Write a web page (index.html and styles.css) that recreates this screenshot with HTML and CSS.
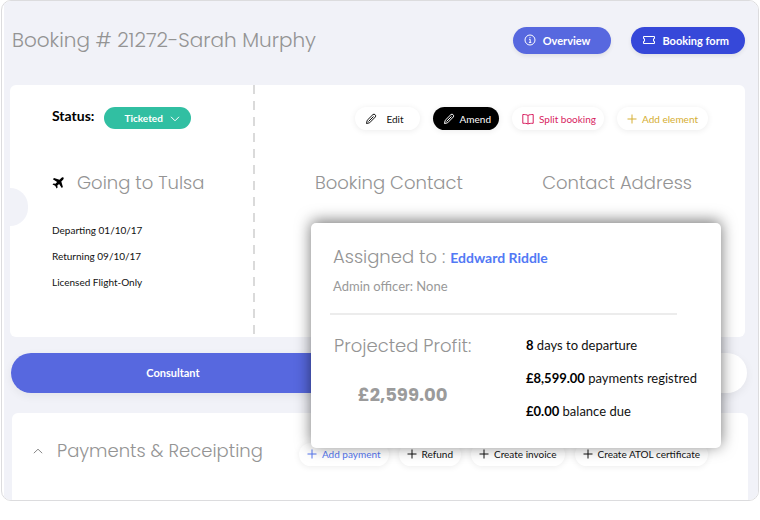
FILE: index.html
```
<!DOCTYPE html>
<html lang="en">

<head>
    <meta charset="utf-8">
    <title>Booking # 21272</title>
    <link rel="stylesheet" href="styles.css">
</head>

<body>
    <div class="frame">
        <div class="page">
            <header class="page-header">
                <h1>Booking # 21272-Sarah Murphy</h1>
                <button type="button" class="main-button overview">
                    <svg class="icon" width="12" height="12" viewBox="0 0 12 12">
                        <circle cx="6" cy="6" r="5" />
                        <path d="M5 5.3h1.2v3M4.9 8.4h2.4M6 3.1v1" />
                    </svg>
                    Overview
                </button>
                <button type="button" class="main-button booking-form">
                    <svg class="icon" width="12" height="12" viewBox="0 0 12 12">
                        <path d="M.5 2.500h11v2.200h-1v2.600h1v2.200H.5V7.300h1V4.700h-1z" />
                    </svg>
                    Booking form
                </button>
            </header>

            <main>
                <section class="card booking">
                    <div class="trip">
                        <div class="status">
                            <label for="status">Status:</label>
                            <div class="status-box">
                                <select id="status">
                                    <option>Ticketed</option>
                                </select>
                                <svg class="icon" width="10" height="6" viewBox="0 0 10 6">
                                    <path d="M1 .8l4 4 4-4" />
                                </svg>
                            </div>
                        </div>
                        <h2>
                            <svg width="12" height="12" viewBox="0 0 12 12">
                                <path d="M11.4.6c-.6-.6-1.5-.3-2.1.3L7.5 2.700 2 1.100l-1.100 1.100 4.200 2.700L3.500 6.700 1.500 6.400l-1 1 2.700 1.400L4.600 11.500l1-1-.3-2L7.100 6.900 9.800 11.100l1.100-1.100L9.300 4.500l1.800-1.800c.6-.6.9-1.500.3-2.100z" />
                            </svg>
                            Going to Tulsa
                        </h2>
                        <p>Departing 01/10/17</p>
                        <p>Returning 09/10/17</p>
                        <p>Licensed Flight-Only</p>
                    </div>
                    <div class="details">
                        <div class="actions">
                            <button type="button" class="pill edit">
                                <svg class="icon" width="12" height="12" viewBox="0 0 12 12">
                                    <path d="M1.500 10.500l.7-3.200L8 1.500c1.300-1.100 3.500.9 2.400 2.400l-5.800 5.900zM3.500 8.500l5-5" />
                                </svg>
                                Edit
                            </button>
                            <button type="button" class="pill amend">
                                <svg class="icon" width="12" height="12" viewBox="0 0 12 12">
                                    <path d="M1.500 10.500l.7-3.200L8 1.500c1.300-1.100 3.500.9 2.400 2.400l-5.800 5.900zM3.500 8.500l5-5" />
                                </svg>
                                Amend
                            </button>
                            <button type="button" class="pill split">
                                <svg class="icon" width="12" height="12" viewBox="0 0 12 12">
                                    <path d="M6 2.500C5 1.600 2.500 1.500.8 1.500v8.800c1.900 0 4.200 0 5.200.7 1-.7 3.300-.7 5.200-.7V1.500C9.500 1.500 7 1.600 6 2.500zM6 2.500V11" />
                                </svg>
                                Split booking
                            </button>
                            <button type="button" class="pill add">
                                <svg class="icon" width="10" height="10" viewBox="0 0 10 10">
                                    <path d="M5 .5v9M.5 5h9" />
                                </svg>
                                Add element
                            </button>
                        </div>
                        <div class="contact">
                            <h2>Booking Contact</h2>
                            <h2>Contact Address</h2>
                        </div>
                    </div>
                </section>

                <nav class="tabs">
                    <a href="#consultant">Consultant</a>
                </nav>

                <section class="card payments">
                    <svg class="icon chevron" width="10" height="6" viewBox="0 0 10 6">
                        <path d="M.8 5.200l4.200-4 4.200 4" />
                    </svg>
                    <h2>Payments &amp; Receipting</h2>
                    <div class="payment-actions">
                        <button type="button" class="pill add-payment">
                            <svg class="icon" width="10" height="10" viewBox="0 0 10 10">
                                <path d="M5 .5v9M.5 5h9" />
                            </svg>
                            Add payment
                        </button>
                        <button type="button" class="pill">
                            <svg class="icon" width="10" height="10" viewBox="0 0 10 10">
                                <path d="M5 .5v9M.5 5h9" />
                            </svg>
                            Refund
                        </button>
                        <button type="button" class="pill">
                            <svg class="icon" width="10" height="10" viewBox="0 0 10 10">
                                <path d="M5 .5v9M.5 5h9" />
                            </svg>
                            Create invoice
                        </button>
                        <button type="button" class="pill">
                            <svg class="icon" width="10" height="10" viewBox="0 0 10 10">
                                <path d="M5 .5v9M.5 5h9" />
                            </svg>
                            Create ATOL certificate
                        </button>
                    </div>
                </section>
            </main>
        </div>

        <!-- Summary popup over the booking -->
        <aside class="popup">
            <div class="assigned">
                <h2>Assigned to : <a href="#consultant">Eddward Riddle</a></h2>
                <p>Admin officer: None</p>
            </div>
            <div class="summary">
                <div class="profit">
                    <h2>Projected Profit:</h2>
                    <strong>£2,599.00</strong>
                </div>
                <ul>
                    <li><b>8</b> days to departure</li>
                    <li><b>£8,599.00</b> payments registred</li>
                    <li><b>£0.00</b> balance due</li>
                </ul>
            </div>
        </aside>
    </div>
</body>

</html>
```
FILE: styles.css
```
* {
    box-sizing: border-box;
}

body {
    font-family: Lato, sans-serif;
    font-size: 10px;
    margin: 0;
    color: #111;
    background-color: #fff;
}

h1,
h2,
p,
ul {
    margin: 0;
    padding: 0;
    font-weight: normal;
}

h1,
h2 {
    font-family: Poppins, Inter, sans-serif;
    font-weight: 300;
    font-size: 18px;
    line-height: 28px;
    color: #949494;
    white-space: nowrap;
}

h1 {
    flex: 1;
    font-size: 20px;
}

a {
    text-decoration: none;
}

button {
    display: flex;
    align-items: center;
    font-family: inherit;
    border: none;
    cursor: pointer;
    white-space: nowrap;
}

.icon {
    flex: none;
    fill: none;
    stroke: currentColor;
}

.frame {
    position: relative;
    margin: 0 1px;
    padding-left: 2px;
    border: 1px solid #dcdcde;
    border-radius: 10px;
    overflow: hidden;
}

.page {
    background-color: #f1f2f8;
}

.page-header {
    display: flex;
    align-items: center;
    gap: 20px;
    height: 84px;
    padding: 0 13px 6px 8px;
}

.main-button {
    height: 27px;
    gap: 7px;
    padding: 0 16px 0 12px;
    border-radius: 14px;
    color: #fff;
    font-size: 11px;
    font-weight: bold;
    box-shadow: 0 2px 4px rgba(0, 0, 0, 0.08);
}

.overview {
    padding: 0 21px 0 11px;
    background-color: #5768df;
}

.booking-form {
    background-color: #3648d9;
}

.card {
    display: flex;
    background-color: #fff;
    border-radius: 6px;
}

.booking {
    position: relative;
    margin: 0 13px 16px 6px;
    height: 252px;
}

/* Notch on the left edge of the ticket */
.booking::before {
    content: "";
    position: absolute;
    left: 0;
    top: 103px;
    width: 18px;
    height: 38px;
    border-radius: 0 19px 19px 0;
    background-color: #f1f2f8;
}

.trip {
    width: 245px;
    padding: 22px 0 0 42px;
    background: repeating-linear-gradient(#dadada 0 9px, transparent 9px 16px) right / 2px 100% no-repeat;
}

.status {
    display: flex;
    align-items: center;
    gap: 10px;
    height: 22px;
    margin-bottom: 40px;
}

.status label {
    font-size: 14px;
    font-weight: bold;
    line-height: 18px;
    padding-bottom: 4px;
    color: #000;
}

.status-box {
    position: relative;
    color: #fff;
}

.status-box select {
    display: block;
    appearance: none;
    width: 87px;
    height: 22px;
    padding: 0 20px;
    border: none;
    border-radius: 11px;
    background-color: #31bfa2;
    color: #fff;
    font-family: inherit;
    font-size: 10px;
    font-weight: bold;
}

.status-box .icon {
    position: absolute;
    right: 11px;
    top: 9px;
    pointer-events: none;
}

.trip h2 {
    display: flex;
    align-items: center;
    gap: 13px;
    margin-bottom: 20px;
}

.trip h2 svg {
    fill: #000;
}

.trip p {
    line-height: 26px;
}

.details {
    flex: 1;
    padding: 22px 37px 0 60px;
}

.actions {
    display: flex;
    justify-content: flex-end;
    gap: 13px;
    margin-bottom: 39px;
}

.pill {
    height: 23px;
    gap: 5px;
    padding: 0 8px;
    border-radius: 12px;
    background-color: #fff;
    color: #111;
    font-size: 10px;
    box-shadow: 0 1px 6px rgba(0, 0, 0, 0.08);
}

.edit {
    gap: 9px;
    padding: 0 16px 0 10px;
}

.amend {
    padding: 0 8px 0 10px;
    background-color: #000;
    color: #fff;
}

.split {
    padding-left: 10px;
    color: #d81e5f;
}

.add {
    padding: 0 10px;
    color: #d5ae32;
}

.contact {
    display: flex;
    justify-content: space-between;
    padding-right: 16px;
}

.tabs {
    display: flex;
    height: 40px;
    margin: 0 11px 20px 7px;
    border-radius: 20px;
    background-color: #fff;
    box-shadow: 0 3px 10px rgba(0, 0, 0, 0.06);
}

.tabs a {
    width: 44%;
    border-radius: 20px 0 0 20px;
    background-color: #5768df;
    color: #fff;
    font-size: 11px;
    font-weight: bold;
    line-height: 40px;
    text-align: center;
}

.payments {
    align-items: center;
    height: 87px;
    margin: 0 10px 0 8px;
    padding: 0 40px 12px 21px;
    border-radius: 6px 6px 0 0;
}

.payments h2 {
    flex: 1;
    margin-left: 14px;
}

.chevron {
    color: #888;
}

.payment-actions {
    display: flex;
    gap: 10px;
    padding-top: 7px;
}

.add-payment {
    color: #5476f0;
}

.popup {
    position: absolute;
    top: 222px;
    right: 37px;
    width: 410px;
    padding: 20px 24px 20px 19px;
    border-radius: 5px;
    background-color: #fff;
    box-shadow: 0 -2px 15px rgba(0, 0, 0, 0.55);
}

.assigned {
    margin-right: 20px;
    padding: 0 0 13px 3px;
    border-bottom: 2px solid #ececec;
}

.assigned a {
    font-family: Lato, sans-serif;
    font-size: 14px;
    font-weight: bold;
    color: #5279f5;
}

.assigned p {
    font-size: 13px;
    line-height: 28px;
    color: #999;
}

.summary {
    display: flex;
    justify-content: space-between;
    padding: 14px 0 0 4px;
}

.profit h2 {
    line-height: 34px;
}

.profit strong {
    display: block;
    margin-top: 18px;
    font-family: Poppins, Inter, sans-serif;
    font-size: 18px;
    line-height: 28px;
    color: #9b9b9b;
    text-align: center;
}

.summary ul {
    list-style: none;
    font-size: 13px;
    line-height: 33px;
    color: #111;
}

.summary b {
    color: #000;
}
```
